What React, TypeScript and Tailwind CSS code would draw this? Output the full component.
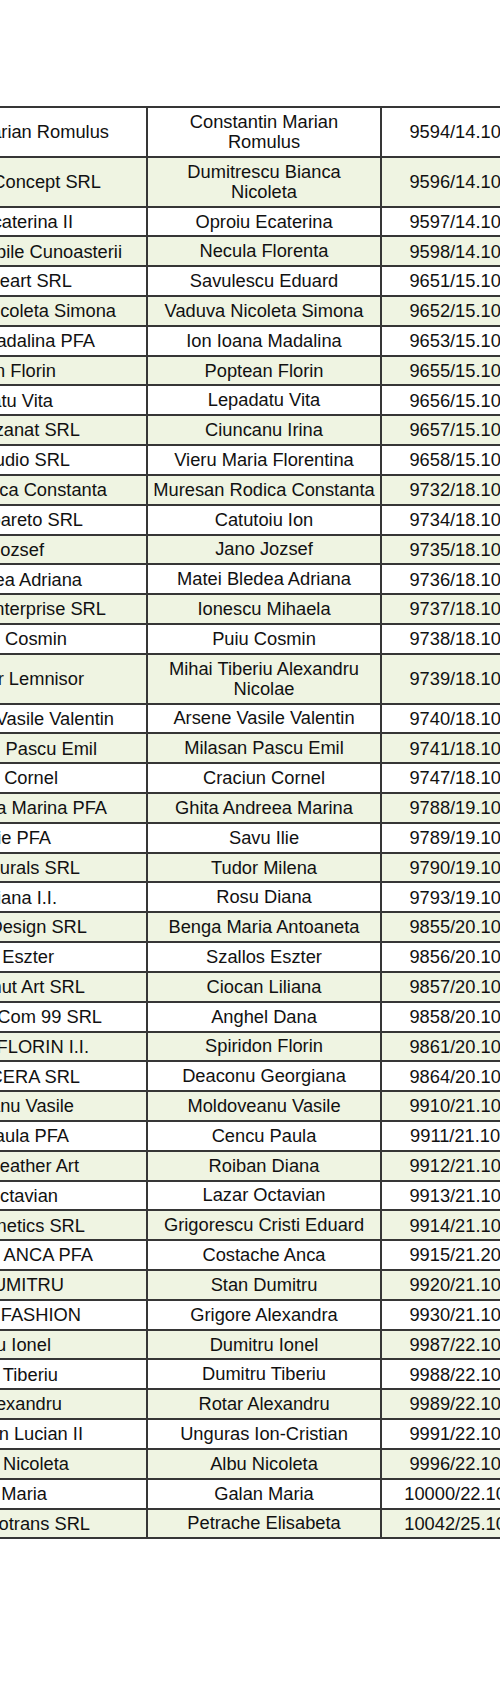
type Row = {
  firm: string;
  w: string; // where the clipped firm name ends
  name: string;
  nr: string;
  tall?: boolean;
};

const rows: Row[] = [
  { firm: "Constantin Marian Romulus", w: "w-[109px]", name: "Constantin Marian\nRomulus", nr: "9594/14.10.2021", tall: true },
  { firm: "Bianca Concept SRL", w: "w-[101px]", name: "Dumitrescu Bianca\nNicoleta", nr: "9596/14.10.2021", tall: true },
  { firm: "Oproiu Ecaterina II", w: "w-[73px]", name: "Oproiu Ecaterina", nr: "9597/14.10.2021" },
  { firm: "Tainele Incomparabile Cunoasterii", w: "w-[122px]", name: "Necula Florenta", nr: "9598/14.10.2021" },
  { firm: "Eduheart SRL", w: "w-[72px]", name: "Savulescu Eduard", nr: "9651/15.10.2021" },
  { firm: "Vaduva Nicoleta Simona", w: "w-[116px]", name: "Vaduva Nicoleta Simona", nr: "9652/15.10.2021" },
  { firm: "Ion Ioana Madalina PFA", w: "w-[95px]", name: "Ion Ioana Madalina", nr: "9653/15.10.2021" },
  { firm: "Poptean Florin", w: "w-[56px]", name: "Poptean Florin", nr: "9655/15.10.2021" },
  { firm: "Lepadatu Vita", w: "w-[53px]", name: "Lepadatu Vita", nr: "9656/15.10.2021" },
  { firm: "Cornel Artizanat SRL", w: "w-[80px]", name: "Ciuncanu Irina", nr: "9657/15.10.2021" },
  { firm: "Art Studio SRL", w: "w-[70px]", name: "Vieru Maria Florentina", nr: "9658/15.10.2021" },
  { firm: "Muresan Rodica Constanta", w: "w-[107px]", name: "Muresan Rodica Constanta", nr: "9732/18.10.2021" },
  { firm: "Cafe Cabareto SRL", w: "w-[83px]", name: "Catutoiu Ion", nr: "9734/18.10.2021" },
  { firm: "Jano Jozsef", w: "w-[44px]", name: "Jano Jozsef", nr: "9735/18.10.2021" },
  { firm: "Matei Bledea Adriana", w: "w-[82px]", name: "Matei Bledea Adriana", nr: "9736/18.10.2021" },
  { firm: "Ionescu Enterprise SRL", w: "w-[106px]", name: "Ionescu Mihaela", nr: "9737/18.10.2021" },
  { firm: "Puiu Cosmin", w: "w-[67px]", name: "Puiu Cosmin", nr: "9738/18.10.2021" },
  { firm: "Atelier Fluier Lemnisor", w: "w-[84px]", name: "Mihai Tiberiu Alexandru\nNicolae", nr: "9739/18.10.2021", tall: true },
  { firm: "Arsene Vasile Valentin", w: "w-[114px]", name: "Arsene Vasile Valentin", nr: "9740/18.10.2021" },
  { firm: "Milasan Pascu Emil", w: "w-[97px]", name: "Milasan Pascu Emil", nr: "9741/18.10.2021" },
  { firm: "Craciun Cornel", w: "w-[58px]", name: "Craciun Cornel", nr: "9747/18.10.2021" },
  { firm: "Ghita Andreea Marina PFA", w: "w-[107px]", name: "Ghita Andreea Marina", nr: "9788/19.10.2021" },
  { firm: "Savu Ilie PFA", w: "w-[51px]", name: "Savu Ilie", nr: "9789/19.10.2021" },
  { firm: "Tudor Naturals SRL", w: "w-[80px]", name: "Tudor Milena", nr: "9790/19.10.2021" },
  { firm: "Rosu Diana I.I.", w: "w-[57px]", name: "Rosu Diana", nr: "9793/19.10.2021" },
  { firm: "Benga Design SRL", w: "w-[87px]", name: "Benga Maria Antoaneta", nr: "9855/20.10.2021" },
  { firm: "Szallos Eszter", w: "w-[54px]", name: "Szallos Eszter", nr: "9856/20.10.2021" },
  { firm: "Coconut Art SRL", w: "w-[85px]", name: "Ciocan Liliana", nr: "9857/20.10.2021" },
  { firm: "Anghel Com 99 SRL", w: "w-[102px]", name: "Anghel Dana", nr: "9858/20.10.2021" },
  { firm: "SPIRIDON FLORIN I.I.", w: "w-[89px]", name: "Spiridon Florin", nr: "9861/20.10.2021" },
  { firm: "GEOCERA SRL", w: "w-[80px]", name: "Deaconu Georgiana", nr: "9864/20.10.2021" },
  { firm: "Moldoveanu Vasile", w: "w-[74px]", name: "Moldoveanu Vasile", nr: "9910/21.10.2021" },
  { firm: "Cencu Paula PFA", w: "w-[69px]", name: "Cencu Paula", nr: "9911/21.10.2021" },
  { firm: "Roiban Leather Art", w: "w-[79px]", name: "Roiban Diana", nr: "9912/21.10.2021" },
  { firm: "Lazar Octavian", w: "w-[58px]", name: "Lazar Octavian", nr: "9913/21.10.2021" },
  { firm: "Art Genetics SRL", w: "w-[85px]", name: "Grigorescu Cristi Eduard", nr: "9914/21.10.2021" },
  { firm: "COSTACHE ANCA PFA", w: "w-[93px]", name: "Costache Anca", nr: "9915/21.20.2021" },
  { firm: "STAN DUMITRU", w: "w-[64px]", name: "Stan Dumitru", nr: "9920/21.10.2021" },
  { firm: "ALEXA FASHION", w: "w-[81px]", name: "Grigore Alexandra", nr: "9930/21.10.2021" },
  { firm: "Dumitru Ionel", w: "w-[51px]", name: "Dumitru Ionel", nr: "9987/22.10.2021" },
  { firm: "Dumitru Tiberiu", w: "w-[58px]", name: "Dumitru Tiberiu", nr: "9988/22.10.2021" },
  { firm: "Rotar Alexandru", w: "w-[62px]", name: "Rotar Alexandru", nr: "9989/22.10.2021" },
  { firm: "Unguras Ion Lucian II", w: "w-[83px]", name: "Unguras Ion-Cristian", nr: "9991/22.10.2021" },
  { firm: "Albu Nicoleta", w: "w-[69px]", name: "Albu Nicoleta", nr: "9996/22.10.2021" },
  { firm: "Galan Maria", w: "w-[47px]", name: "Galan Maria", nr: "10000/22.10.2021" },
  { firm: "Autotrans SRL", w: "w-[90px]", name: "Petrache Elisabeta", nr: "10042/25.10.2021" },
];

export default function App() {
  return (
    <div className="w-[500px] h-[1684px] overflow-hidden bg-white pt-[106px] font-['Liberation_Sans',Arial,sans-serif] text-[18.3px] text-[#111]">
      {/* table, wider than the screen: left and right cut off */}
      <div className="w-[574px] border-t-2 border-[#363636]">
        {rows.map((r, i) => (
          <div
            key={r.nr}
            className={
              "grid grid-cols-[148px_234px_192px] border-b-2 border-[#363636] " +
              (r.tall ? "h-[49.8px] " : "h-[29.82px] ") +
              (i % 2 ? "bg-[#eff4e2]" : "bg-white")
            }
          >
            {/* firm */}
            <div className="flex items-center overflow-hidden border-r-2 border-[#363636]">
              <div className={"flex justify-end whitespace-nowrap " + r.w}>
                <span>{r.firm}</span>
              </div>
            </div>

            {/* name */}
            <div className="flex items-center justify-center border-r-2 border-[#363636] text-center whitespace-pre-line leading-[20px]">
              {r.name}
            </div>

            {/* number / date */}
            <div className="flex items-center justify-center whitespace-nowrap">
              {r.nr}
            </div>
          </div>
        ))}
      </div>
    </div>
  );
}
